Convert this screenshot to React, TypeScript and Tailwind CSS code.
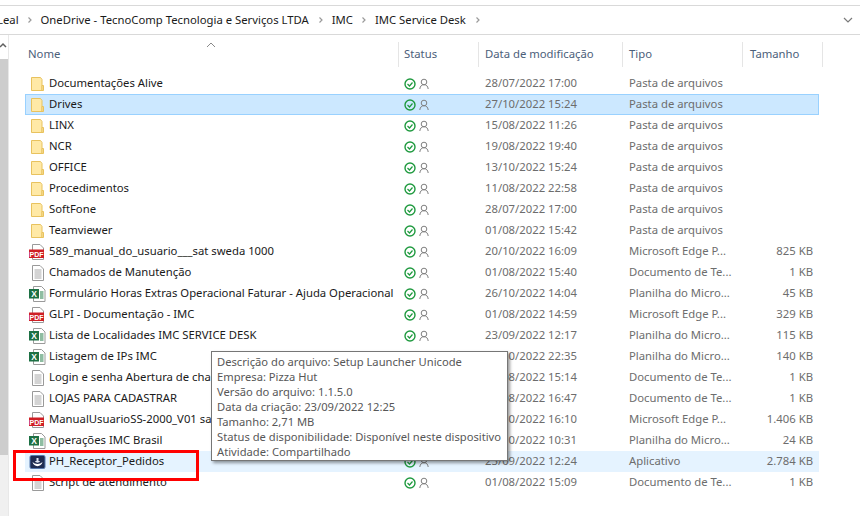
const FONT = "font-['Noto_Sans',sans-serif]";

type Kind = "folder" | "pdf" | "doc" | "xls" | "app";

type Item = {
  name: string;
  date: string;
  type: string;
  size?: string;
  kind: Kind;
  selected?: boolean;
  hovered?: boolean;
};

const items: Item[] = [
  { name: "Documentações Alive", date: "28/07/2022 17:00", type: "Pasta de arquivos", kind: "folder" },
  { name: "Drives", date: "27/10/2022 15:24", type: "Pasta de arquivos", kind: "folder", selected: true },
  { name: "LINX", date: "15/08/2022 11:26", type: "Pasta de arquivos", kind: "folder" },
  { name: "NCR", date: "19/08/2022 19:40", type: "Pasta de arquivos", kind: "folder" },
  { name: "OFFICE", date: "13/10/2022 15:24", type: "Pasta de arquivos", kind: "folder" },
  { name: "Procedimentos", date: "11/08/2022 22:58", type: "Pasta de arquivos", kind: "folder" },
  { name: "SoftFone", date: "28/07/2022 17:00", type: "Pasta de arquivos", kind: "folder" },
  { name: "Teamviewer", date: "01/08/2022 15:42", type: "Pasta de arquivos", kind: "folder" },
  { name: "589_manual_do_usuario___sat sweda 1000", date: "20/10/2022 16:09", type: "Microsoft Edge P...", size: "825 KB", kind: "pdf" },
  { name: "Chamados de Manutenção", date: "01/08/2022 15:40", type: "Documento de Te...", size: "1 KB", kind: "doc" },
  { name: "Formulário Horas Extras Operacional Faturar - Ajuda Operacional", date: "26/10/2022 14:04", type: "Planilha do Micro...", size: "45 KB", kind: "xls" },
  { name: "GLPI - Documentação - IMC", date: "01/08/2022 14:59", type: "Microsoft Edge P...", size: "329 KB", kind: "pdf" },
  { name: "Lista de Localidades IMC SERVICE DESK", date: "23/09/2022 12:17", type: "Planilha do Micro...", size: "115 KB", kind: "xls" },
  { name: "Listagem de IPs IMC", date: "20/10/2022 22:35", type: "Planilha do Micro...", size: "140 KB", kind: "xls" },
  { name: "Login e senha Abertura de cha", date: "01/08/2022 15:14", type: "Documento de Te...", size: "1 KB", kind: "doc" },
  { name: "LOJAS PARA CADASTRAR", date: "01/08/2022 16:47", type: "Documento de Te...", size: "1 KB", kind: "doc" },
  { name: "ManualUsuarioSS-2000_V01 sat", date: "20/10/2022 16:10", type: "Microsoft Edge P...", size: "1.406 KB", kind: "pdf" },
  { name: "Operações IMC Brasil", date: "20/10/2022 10:31", type: "Planilha do Micro...", size: "24 KB", kind: "xls" },
  { name: "PH_Receptor_Pedidos", date: "23/09/2022 12:24", type: "Aplicativo", size: "2.784 KB", kind: "app", hovered: true },
  { name: "Script de atendimento", date: "01/08/2022 15:09", type: "Documento de Te...", size: "1 KB", kind: "doc" },
];

const tooltipLines = [
  "Descrição do arquivo: Setup Launcher Unicode",
  "Empresa: Pizza Hut",
  "Versão do arquivo: 1.1.5.0",
  "Data da criação: 23/09/2022 12:25",
  "Tamanho: 2,71 MB",
  "Status de disponibilidade: Disponível neste dispositivo",
  "Atividade: Compartilhado",
];

function FileIcon({ kind }: { kind: Kind }) {
  if (kind === "folder") {
    return (
      <svg width="16" height="16" viewBox="0 0 16 16" className="shrink-0">
        <path d="M1.500 1.500h9l1.500 2v11h-10.500z" fill="#ffe9a6" stroke="#e8c25e" />
        <path d="M12 9.500h1.500v5H12z" fill="#ffe9a6" stroke="#e8c25e" />
      </svg>
    );
  }
  if (kind === "app") {
    return (
      <svg width="16" height="16" viewBox="0 0 16 16" className="shrink-0 overflow-visible">
        <rect x="0" y="1.500" width="15" height="13" rx="1.500" fill="#1f2d52" stroke="#5578ad" />
        <path d="M2.500 8c1 5.500 9 5.500 10 0-2.500 2.500-7.500 2.500-10 0z" fill="#ffffff" />
        <path d="M5 7.500c1 1.500 4 1.500 5 0-.5-.5-1-.5-1.500-.5V4h-2v3c-.5 0-1 0-1.500.5z" fill="#dfe6f3" />
      </svg>
    );
  }
  const page = <path d="M2.500 .5h7.500l3.500 3.500v11.500H2.500z" fill="#fff" stroke="#9a9a9a" />;
  if (kind === "doc") {
    return (
      <svg width="16" height="16" viewBox="0 0 16 16" className="shrink-0">
        {page}
        <path d="M4.500 5h7M4.500 7h7M4.500 9h7M4.500 11h7M4.500 13h7" stroke="#a8a8a8" />
      </svg>
    );
  }
  if (kind === "pdf") {
    return (
      <svg width="16" height="16" viewBox="0 0 16 16" className="shrink-0 overflow-visible">
        {page}
        <rect x="-1" y="5.500" width="15" height="8.500" fill="#cf1f25" />
        <text x="6.500" y="12.500" fontSize="7" fontWeight="700" textAnchor="middle" fill="#fff" fontFamily="Liberation Sans, sans-serif">
          PDF
        </text>
      </svg>
    );
  }
  return (
    <svg width="16" height="16" viewBox="0 0 16 16" className="shrink-0 overflow-visible">
      <path d="M3.500 .5h8l3.500 3.500v11.500H3.500z" fill="#fff" stroke="#9a9a9a" />
      <path d="M10 6h3.500M10 8h3.500M10 10h3.500M10 12h3.500" stroke="#1e7b45" />
      <rect x="-1" y="3" width="10" height="9.500" fill="#1d7044" />
      <text x="4" y="10.800" fontSize="8.500" fontWeight="700" textAnchor="middle" fill="#fff" fontFamily="Liberation Sans, sans-serif">
        X
      </text>
    </svg>
  );
}

function StatusIcons() {
  return (
    <div className="flex items-center gap-[2px]">
      <svg width="12" height="12" viewBox="0 0 12 12">
        <circle cx="6" cy="6" r="5" fill="none" stroke="#1f9a3f" strokeWidth="1.400" />
        <path d="M3.500 6l2 2 3-3.500" fill="none" stroke="#1f9a3f" strokeWidth="1.200" />
      </svg>
      <svg width="12" height="12" viewBox="0 0 12 12">
        <circle cx="6" cy="4" r="2.800" fill="none" stroke="#808080" />
        <path d="M1.800 11c.3-3 2-4.300 4.200-4.300s3.900 1.300 4.200 4.300" fill="none" stroke="#808080" />
      </svg>
    </div>
  );
}

function Chevron() {
  return (
    <svg width="8" height="8" viewBox="0 0 8 8" className="mx-[6px] shrink-0">
      <path d="M2.500 1.500L5 4 2.500 6.500" fill="none" stroke="#9a9a9a" strokeWidth="1.200" />
    </svg>
  );
}

function Breadcrumbs() {
  return (
    <div className="mt-[5px] h-[30px] flex items-center border-y border-[#d9d9d9] text-[11.3px] text-[#1a1a1a] overflow-hidden">
      <span className="ml-[-3px] mr-[1px]">Leal</span>
      <Chevron />
      <span className="ml-[1px] mr-[2px]">OneDrive - TecnoComp Tecnologia e Serviços LTDA</span>
      <Chevron />
      <span className="ml-[1px] mr-[1px]">IMC</span>
      <Chevron />
      <span className="ml-[1px] mr-[2px]">IMC Service Desk</span>
      <Chevron />
      <svg width="10" height="10" viewBox="0 0 10 10" className="ml-auto mr-[7px]">
        <path d="M1 3l4 4 4-4" fill="none" stroke="#7a7a7a" strokeWidth="1.200" />
      </svg>
    </div>
  );
}

function HeaderCell({ label, width, pad }: { label: string; width: string; pad: string }) {
  return (
    <div className={`${width} ${pad} h-[25px] flex items-center border-r border-[#e5e5e5] shrink-0`}>
      {label}
    </div>
  );
}

function Row({ item }: { item: Item }) {
  const bg = item.selected
    ? "bg-[#cce8ff] shadow-[inset_0_0_0_1px_#99d1ff]"
    : item.hovered
      ? "bg-[#e5f3ff]"
      : "";
  return (
    <div className={`h-[21px] w-[794px] flex items-center text-[11.3px] text-[#6d6d6d] ${bg}`}>
      <div className="w-[373px] pl-[5px] flex items-center gap-[3px] shrink-0">
        <FileIcon kind={item.kind} />
        <span className="text-[#1a1a1a] whitespace-nowrap">{item.name}</span>
      </div>
      <div className="w-[87px] pl-[6px] shrink-0">
        <StatusIcons />
      </div>
      <div className="w-[144px] shrink-0">{item.date}</div>
      <div className="w-[110px] shrink-0 whitespace-nowrap">{item.type}</div>
      <div className="w-[74px] shrink-0 text-right">{item.size}</div>
    </div>
  );
}

export default function App() {
  return (
    <div className={`relative w-[860px] h-[516px] bg-white overflow-hidden ${FONT}`}>
      <Breadcrumbs />
      <div className="flex h-[481px]">
        {/* nav pane scrollbar */}
        <div className="w-[9px] border-r border-[#e8e8e8] shrink-0 flex flex-col">
          <div className="h-[7px]" />
          <div className="h-[17px] text-center">
            <svg width="8" height="8" viewBox="0 0 8 8">
              <path d="M0 5l3-3 3 3" fill="none" stroke="#606060" strokeWidth="1.500" />
            </svg>
          </div>
          <div className="h-[396px] bg-[#cdcdcd]" />
          <div className="flex-1 bg-[#f0f0f0]" />
        </div>

        <div className="flex-1 pl-[16px]">
          <div className="relative mt-[7px] flex text-[11.3px] text-[#4c607a]">
            <HeaderCell label="Nome" width="w-[374px]" pad="pl-[3px]" />
            <HeaderCell label="Status" width="w-[80px]" pad="pl-[5px]" />
            <HeaderCell label="Data de modificação" width="w-[144px]" pad="pl-[6px]" />
            <HeaderCell label="Tipo" width="w-[120px]" pad="pl-[6px]" />
            <HeaderCell label="Tamanho" width="w-[80px]" pad="pl-[7px]" />
            <svg width="10" height="6" viewBox="0 0 10 6" className="absolute left-[181px] top-0">
              <path d="M1 5l4-4 4 4" fill="none" stroke="#8a8a8a" />
            </svg>
          </div>
          <div className="mt-[6px]">
            {items.map((item) => (
              <Row key={item.name} item={item} />
            ))}
          </div>
        </div>
      </div>

      {/* hover tooltip */}
      <div className="absolute left-[211px] top-[351px] w-[297px] h-[110px] bg-white border border-[#767676] shadow-[2px_2px_3px_rgba(0,0,0,0.4)] pt-[2px] pl-[5px] text-[11.2px] leading-[15px] text-[#575757]">
        {tooltipLines.map((line) => (
          <div key={line} className="whitespace-nowrap">{line}</div>
        ))}
      </div>

      {/* red annotation box */}
      <div className="absolute left-[13px] top-[450px] w-[186px] h-[31px] border-[3px] border-[#ff0000]" />
    </div>
  );
}
